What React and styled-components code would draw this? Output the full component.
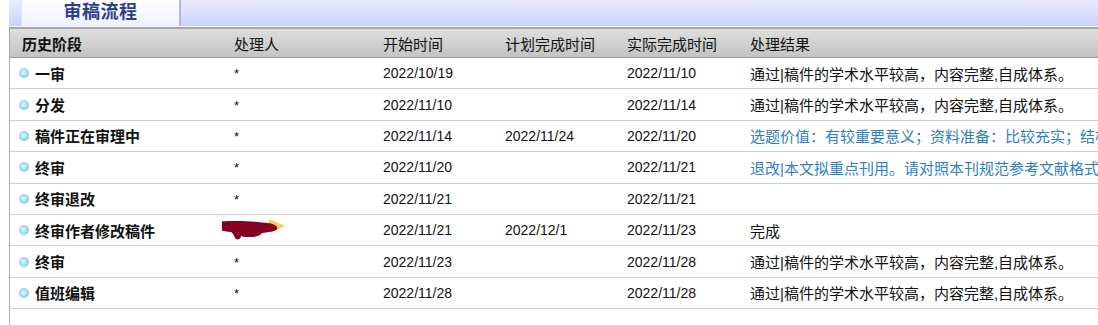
import React from "react";
import styled, { createGlobalStyle } from "styled-components";

const GlobalStyle = createGlobalStyle`
  html, body {
    margin: 0;
    padding: 0;
    background: #fff;
    overflow: hidden;
  }
  body {
    font-family: "Liberation Sans", "Noto Sans CJK SC", sans-serif;
    font-size: 14px;
    color: #111;
  }
`;

const COLS = "212px 149px 122px 122px 123px 1fr";

const rows = [
  { stage: "一审", who: "*", start: "2022/10/19", plan: "", done: "2022/11/10", result: "通过|稿件的学术水平较高，内容完整,自成体系。" },
  { stage: "分发", who: "*", start: "2022/11/10", plan: "", done: "2022/11/14", result: "通过|稿件的学术水平较高，内容完整,自成体系。" },
  { stage: "稿件正在审理中", who: "*", start: "2022/11/14", plan: "2022/11/24", done: "2022/11/20", result: "选题价值：有较重要意义；资料准备：比较充实；结构安排：比较合理", link: true },
  { stage: "终审", who: "*", start: "2022/11/20", plan: "", done: "2022/11/21", result: "退改|本文拟重点刊用。请对照本刊规范参考文献格式修改", link: true },
  { stage: "终审退改", who: "*", start: "2022/11/21", plan: "", done: "2022/11/21", result: "" },
  { stage: "终审作者修改稿件", who: null, start: "2022/11/21", plan: "2022/12/1", done: "2022/11/23", result: "完成" },
  { stage: "终审", who: "*", start: "2022/11/23", plan: "", done: "2022/11/28", result: "通过|稿件的学术水平较高，内容完整,自成体系。" },
  { stage: "值班编辑", who: "*", start: "2022/11/28", plan: "", done: "2022/11/28", result: "通过|稿件的学术水平较高，内容完整,自成体系。" },
];

const App = () => (
  <>
    <GlobalStyle />
    <Page>
      <TabBar>
        <Tab>审稿流程</Tab>
      </TabBar>
      <Table>
        <HeadRow>
          <HeadCell>历史阶段</HeadCell>
          <HeadCell>处理人</HeadCell>
          <HeadCell>开始时间</HeadCell>
          <HeadCell>计划完成时间</HeadCell>
          <HeadCell>实际完成时间</HeadCell>
          <HeadCell>处理结果</HeadCell>
        </HeadRow>
        {rows.map((r, i) => (
          <Row key={i}>
            <StageCell>
              <Dot />
              {r.stage}
            </StageCell>
            <Cell>{r.who === null ? <Scribble /> : <Star>{r.who}</Star>}</Cell>
            <Cell>{r.start}</Cell>
            <Cell>{r.plan}</Cell>
            <Cell>{r.done}</Cell>
            <ResultCell $link={r.link}>{r.result}</ResultCell>
          </Row>
        ))}
      </Table>
    </Page>
  </>
);

const Scribble = () => (
  <ScribbleSvg width="76" height="22" viewBox="0 0 76 22">
    <path d="M57 0 L73 7 L58 14 Z" fill="#f0cc62" />
    <path
      d="M2 6 C3 2 12 2 24 2 C36 2 48 3 56 4 C62 5 66 7 65 10 C63 13 56 13 50 14 C48 17 44 18 38 18 C34 18 31 18 29 17 C29 20 26 21 24 20 C22 18 22 15 19 13 C12 12 2 12 2 6 Z"
      fill="#860020"
    />
  </ScribbleSvg>
);

const ScribbleSvg = styled.svg`
  display: block;
  margin-left: -22px;
  margin-top: 0;
`;

const Page = styled.div`
  width: 1098px;
  height: 325px;
  overflow: hidden;
  padding-left: 9px;
  box-sizing: border-box;
`;

const TabBar = styled.div`
  height: 26px;
  display: flex;
  padding-left: 12px;
  background: linear-gradient(#eaedfd, #c8d1fb);
  border-bottom: 1px solid #f4f6ff;
  overflow: hidden;
`;

const Tab = styled.div`
  width: 160px;
  height: 26px;
  display: flex;
  justify-content: center;
  align-items: flex-start;
  box-sizing: border-box;
  background: linear-gradient(#ffffff, #eef0fd);
  border-left: 1px solid #dfe3fb;
  border-right: 2px solid #b3b9d6;
  font-family: "Noto Sans CJK SC", sans-serif;
  font-size: 18px;
  line-height: 20px;
  font-weight: 700;
  color: #2e3f88;
  letter-spacing: 0.5px;
`;

const Table = styled.div`
  border-left: 1px solid #a9a9a9;
  border-top: 2px solid #a6a6a6;
  height: 300px;
`;

const HeadRow = styled.div`
  display: grid;
  grid-template-columns: ${COLS};
  height: 28px;
  align-items: center;
  background: linear-gradient(#dedede, #c3c3c3);
  border-bottom: 1px solid #9d9d9d;
`;

const HeadCell = styled.div`
  padding-left: 12px;
  white-space: nowrap;
  font-family: "Noto Sans CJK SC", sans-serif;
  font-size: 15px;
  color: #111;
  &:first-child {
    font-weight: 700;
  }
`;

const Row = styled.div`
  display: grid;
  grid-template-columns: ${COLS};
  height: 30.4px;
  align-items: center;
  border-bottom: 1px solid #d0d0d0;
`;

const Cell = styled.div`
  padding-left: 12px;
  white-space: nowrap;
  overflow: hidden;
  color: #111;
`;

const ResultCell = styled(Cell)`
  font-size: 15px;
  color: ${(p) => (p.$link ? "#2f7fbd" : "#111")};
`;

const StageCell = styled(Cell)`
  padding-left: 9px;
  display: flex;
  align-items: center;
  gap: 6px;
  font-weight: 700;
  font-size: 15px;
  font-family: "Noto Sans CJK SC", sans-serif;
`;

const Dot = styled.span`
  width: 10px;
  height: 10px;
  border-radius: 50%;
  background: radial-gradient(circle at 45% 45%, #eefaff 0%, #9fdcf8 45%, #4fb8ea 100%);
  flex-shrink: 0;
`;

const Star = styled.span`
  font-size: 13px;
`;

export default App;
